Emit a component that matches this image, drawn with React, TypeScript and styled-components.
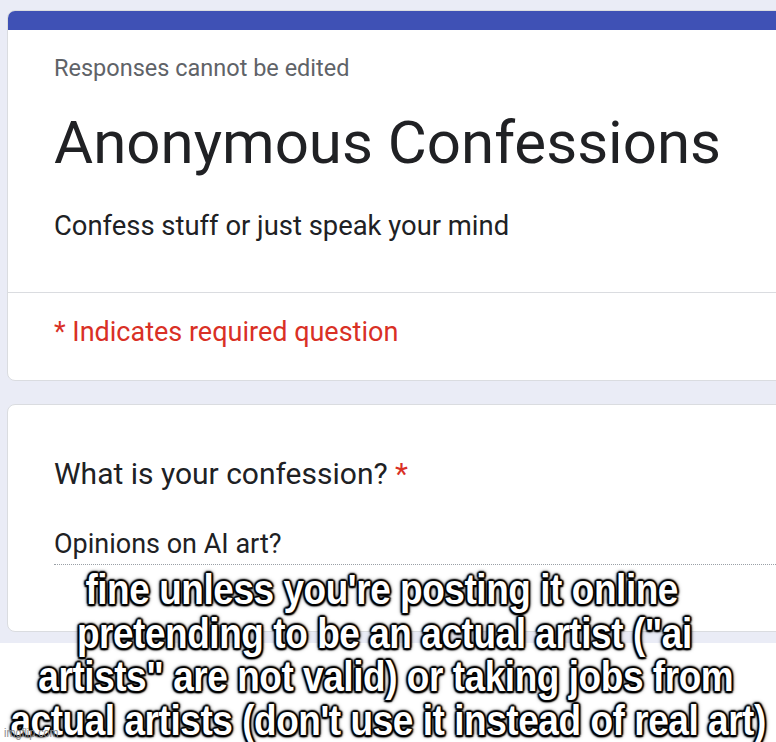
import React from "react";
import styled, { createGlobalStyle } from "styled-components";

const Global = createGlobalStyle`
  html, body { margin: 0; padding: 0; background: #ffffff; }
  body { width: 776px; height: 742px; overflow: hidden; }
`;

const Meme = styled.div`
  position: relative;
  width: 776px;
  height: 742px;
  overflow: hidden;
  background: #ffffff;
  display: flex;
  flex-direction: column;
`;

const Screen = styled.div`
  height: 643px;
  background: #eaecf6;
  padding: 10px 0 0 7px;
  box-sizing: border-box;
  display: flex;
  flex-direction: column;
  gap: 23px;
  overflow: hidden;
  font-family: Roboto, "Liberation Sans", sans-serif;
`;

const Card = styled.section`
  width: 800px;
  background: #ffffff;
  border: 1px solid #dadce0;
  border-radius: 8px;
  box-sizing: border-box;
  overflow: hidden;
`;

const Band = styled.div`
  height: 19px;
  background: #3f51b5;
`;

const Block = styled.div<{ $top: number; $bottom: number }>`
  padding: ${(p) => p.$top}px 0 ${(p) => p.$bottom}px 46px;
`;

const Divider = styled.div`
  height: 1px;
  background: #dadce0;
`;

const Note = styled.div`
  font-size: 23.5px;
  line-height: 24px;
  color: #5f6368;
`;

const Title = styled.h1`
  margin: 28px 0 0;
  font-size: 60px;
  line-height: 70px;
  font-weight: 400;
  color: #202124;
`;

const Subtitle = styled.p`
  margin: 33px 0 0;
  font-size: 27.4px;
  line-height: 30px;
  color: #202124;
`;

const Required = styled.div`
  font-size: 27px;
  line-height: 30px;
  color: #d93025;
`;

const Question = styled.div`
  font-size: 30px;
  line-height: 34px;
  color: #202124;
`;

const Star = styled.span`
  color: #d93025;
`;

const Answer = styled.div`
  margin-top: 38px;
  font-size: 27px;
  line-height: 30px;
  color: #202124;
  padding-bottom: 5px;
  border-bottom: 1px dotted #9aa0a6;
`;

const Caption = styled.div`
  position: absolute;
  left: 0;
  right: 0;
  top: 568px;
  display: flex;
  flex-direction: column;
  align-items: center;
  font-family: "Liberation Sans", Arial, sans-serif;
  font-weight: 700;
  font-size: 42px;
  line-height: 43.5px;
  color: #ffffff;
  letter-spacing: -0.5px;
  text-shadow:
    1.5px 1.5px 1.5px #000, -1.5px -1.5px 1.5px #000, 1.5px -1.5px 1.5px #000, -1.5px 1.5px 1.5px #000,
    0 2px 1.5px #000, 0 -2px 1.5px #000, 2px 0 1.5px #000, -2px 0 1.5px #000,
    0 0 6px #000;
`;

const Line = styled.div<{ $shift: number }>`
  white-space: nowrap;
  flex-shrink: 0;
  transform: translateX(${(p) => p.$shift}px) scaleX(0.88);
`;

const Watermark = styled.div`
  position: absolute;
  left: 4px;
  bottom: 2px;
  font-family: "Liberation Sans", Arial, sans-serif;
  font-size: 12px;
  line-height: 14px;
  color: #8a8a8a;
  transform: scaleX(0.9);
  transform-origin: left center;
`;

const lines: [string, number][] = [
  ["fine unless you're posting it online", -6],
  ["pretending to be an actual artist (\"ai", -4],
  ["artists\" are not valid) or taking jobs from", -2],
  ["actual artists (don't use it instead of real art)", 0],
];

export default function App() {
  return (
    <Meme>
      <Global />
      <Screen>
        <Card>
          <Band />
          <Block $top={26} $bottom={51}>
            <Note>Responses cannot be edited</Note>
            <Title>Anonymous Confessions</Title>
            <Subtitle>Confess stuff or just speak your mind</Subtitle>
          </Block>
          <Divider />
          <Block $top={24} $bottom={33}>
            <Required>* Indicates required question</Required>
          </Block>
        </Card>
        <Card>
          <Block $top={52} $bottom={66}>
            <Question>
              What is your confession? <Star>*</Star>
            </Question>
            <Answer>Opinions on AI art?</Answer>
          </Block>
        </Card>
      </Screen>
      <Caption>
        {lines.map(([l, s]) => (
          <Line key={l} $shift={s}>
            {l}
          </Line>
        ))}
      </Caption>
      <Watermark>imgflip.com</Watermark>
    </Meme>
  );
}
